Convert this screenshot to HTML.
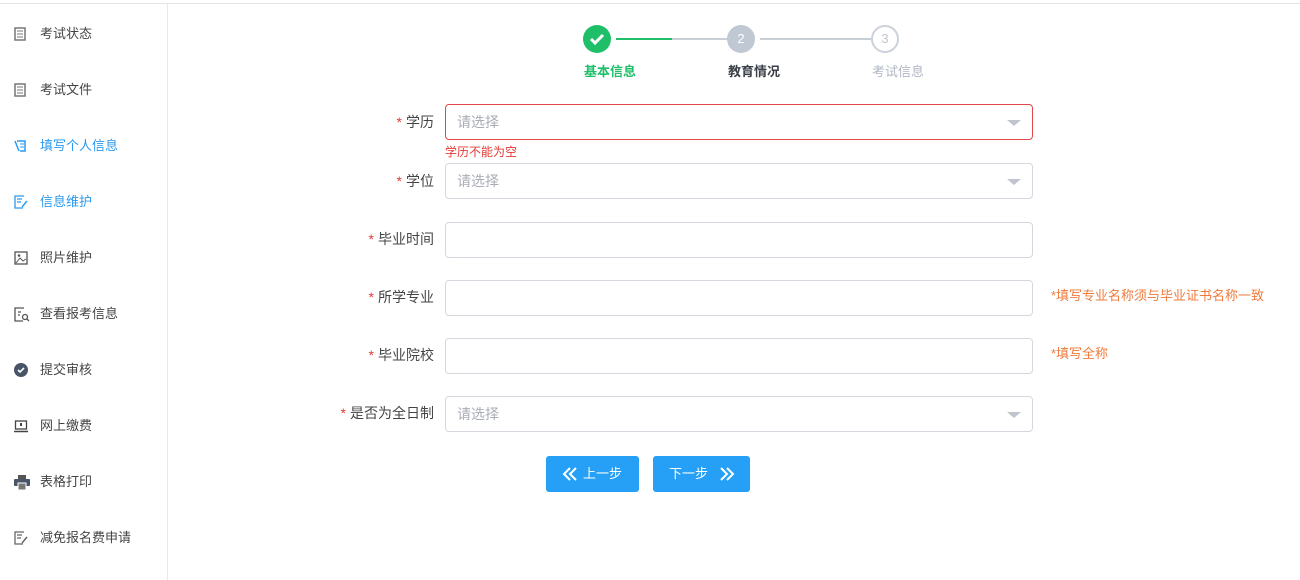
<!DOCTYPE html>
<html><head><meta charset="utf-8"><style>
*{margin:0;padding:0;box-sizing:border-box}
body{width:1300px;height:580px;background:#fff;font-family:"Liberation Sans","Noto Sans CJK SC",sans-serif;position:relative;overflow:hidden;color:#333}
.top{position:absolute;left:0;top:3px;width:1300px;height:1px;background:#e4e4e4}
.side{position:absolute;left:0;top:4px;width:168px;height:576px;border-right:1px solid #e8e8e8}
.mi{position:absolute;left:14px;font-size:13px;color:#444;height:20px;line-height:20px}
.mi svg{position:absolute;left:0;top:3px}
.mi span{position:absolute;left:26px;white-space:nowrap}
.blue{color:#2a9af0}
.abs{position:absolute}
.circ{position:absolute;width:28px;height:28px;border-radius:50%;text-align:center;line-height:28px;font-size:13px}
.lbl{position:absolute;right:866px;font-size:14px;color:#444;height:35px;line-height:35px;white-space:nowrap}
.lbl b{color:#e53935;font-weight:normal;margin-right:4px}
.inp{position:absolute;left:445px;width:588px;height:36px;border:1px solid #d4d8de;border-radius:4px;font-size:14px;color:#a8adb5;line-height:34px;padding-left:11px}
.inp .ar{position:absolute;right:11px;top:15px;width:0;height:0;border-left:7px solid transparent;border-right:7px solid transparent;border-top:6px solid #c0c4cc}
.hint{position:absolute;left:1051px;font-size:13px;color:#f07a3c}
.btn{position:absolute;top:456px;height:36px;background:#26a0f6;border-radius:3px;color:#fff;font-size:13px;line-height:36px}
.btn svg{position:absolute;top:10px}
</style></head><body>
<div class="top"></div>
<div class="side">
<div class="mi" style="top:20px"><svg width="12" height="14"><rect x="1" y="1" width="10" height="12" fill="none" stroke="#777" stroke-width="1.5"/><path d="M3 4h6M3 7h6M3 10h6" stroke="#777"/></svg><span>考试状态</span></div>
<div class="mi" style="top:76px"><svg width="12" height="14"><rect x="1" y="1" width="10" height="12" fill="none" stroke="#777" stroke-width="1.5"/><path d="M3 4h6M3 7h6M3 10h6" stroke="#777"/></svg><span>考试文件</span></div>
<div class="mi blue" style="top:132px"><svg width="12" height="14"><path d="M1 2l4 10M3 2h8v10H6" fill="none" stroke="#2a9af0" stroke-width="1.5"/><path d="M6 5h4M6 8h4" stroke="#2a9af0"/></svg><span>填写个人信息</span></div>
<div class="mi blue" style="top:188px"><svg width="14" height="14"><path d="M10 1H1v12h8M3 4h5M3 7h4" fill="none" stroke="#2a9af0" stroke-width="1.3"/><path d="M8 12l5-6" stroke="#2a9af0" stroke-width="1.5"/></svg><span>信息维护</span></div>
<div class="mi" style="top:244px"><svg width="14" height="14"><rect x="1" y="1" width="12" height="12" fill="none" stroke="#555" stroke-width="1.3"/><path d="M2 12l4-5 3 3 3-2" fill="none" stroke="#555"/><circle cx="5" cy="4.5" r="1.3" fill="#555"/></svg><span>照片维护</span></div>
<div class="mi" style="top:300px"><svg width="16" height="15"><path d="M10 1H1v13h8" fill="none" stroke="#555" stroke-width="1.3"/><circle cx="11" cy="10" r="2.5" fill="none" stroke="#555" stroke-width="1.3"/><path d="M13 12l2 2M4 5h3M4 8h2" stroke="#555" stroke-width="1.3"/></svg><span>查看报考信息</span></div>
<div class="mi" style="top:356px"><svg width="14" height="14"><circle cx="7" cy="7" r="7" fill="#485468"/><path d="M4 7l2 2 4-4" fill="none" stroke="#fff" stroke-width="1.6"/></svg><span>提交审核</span></div>
<div class="mi" style="top:412px"><svg width="14" height="14"><rect x="1.5" y="2" width="11" height="8" fill="none" stroke="#444" stroke-width="1.3"/><rect x="6" y="4" width="2" height="3" fill="#444"/><path d="M0 12.5h14" stroke="#444" stroke-width="1.5"/></svg><span>网上缴费</span></div>
<div class="mi" style="top:468px"><svg width="16" height="15"><rect x="4" y="0" width="8" height="4" fill="#555"/><rect x="0" y="4" width="16" height="7" rx="1" fill="#485468"/><rect x="4" y="8" width="8" height="7" fill="#777" stroke="#fff"/></svg><span>表格打印</span></div>
<div class="mi" style="top:524px"><svg width="14" height="14"><path d="M10 1H1v12h8M3 4h5M3 7h4" fill="none" stroke="#666" stroke-width="1.3"/><path d="M8 12l5-6" stroke="#666" stroke-width="1.5"/></svg><span>减免报名费申请</span></div>
</div>

<div class="circ" style="left:583px;top:25px;background:#1fbf6a"><svg width="28" height="28" style="position:absolute;left:0;top:0"><path d="M8 14l4 4 8-8" fill="none" stroke="#fff" stroke-width="3"/></svg></div>
<div class="abs" style="left:616px;top:38px;width:56px;height:2px;background:#1fbf6a"></div>
<div class="abs" style="left:672px;top:38px;width:56px;height:2px;background:#c8ced6"></div>
<div class="circ" style="left:727px;top:25px;background:#c0c8d4;color:#fff">2</div>
<div class="abs" style="left:760px;top:38px;width:112px;height:2px;background:#c8ced6"></div>
<div class="circ" style="left:871px;top:25px;border:2px solid #ccd2da;color:#c0c6ce;line-height:24px">3</div>
<div class="abs" style="left:584px;top:61px;font-size:13px;font-weight:bold;color:#1fbf6a">基本信息</div>
<div class="abs" style="left:728px;top:61px;font-size:13px;font-weight:bold;color:#3a3f48">教育情况</div>
<div class="abs" style="left:872px;top:61px;font-size:13px;color:#b0b8c4">考试信息</div>

<div class="lbl" style="top:105px"><b>*</b>学历</div>
<div class="inp" style="top:104px;border-color:#e0474c">请选择<div class="ar"></div></div>
<div class="abs" style="left:445px;top:143px;font-size:12px;color:#e53935">学历不能为空</div>
<div class="lbl" style="top:164px"><b>*</b>学位</div>
<div class="inp" style="top:163px">请选择<div class="ar"></div></div>
<div class="lbl" style="top:222px"><b>*</b>毕业时间</div>
<div class="inp" style="top:222px"></div>
<div class="lbl" style="top:280px"><b>*</b>所学专业</div>
<div class="inp" style="top:280px"></div>
<div class="hint" style="top:285px">*填写专业名称须与毕业证书名称一致</div>
<div class="lbl" style="top:338px"><b>*</b>毕业院校</div>
<div class="inp" style="top:338px"></div>
<div class="hint" style="top:343px">*填写全称</div>
<div class="lbl" style="top:396px"><b>*</b>是否为全日制</div>
<div class="inp" style="top:396px">请选择<div class="ar"></div></div>

<div class="btn" style="left:546px;width:93px"><svg width="16" height="16" style="left:16px"><path d="M8 2L2 8l6 6M14 2L8 8l6 6" fill="none" stroke="#fff" stroke-width="2"/></svg><span style="position:absolute;left:37px">上一步</span></div>
<div class="btn" style="left:653px;width:97px"><span style="position:absolute;left:16px">下一步</span><svg width="16" height="16" style="left:66px"><path d="M2 2l6 6-6 6M8 2l6 6-6 6" fill="none" stroke="#fff" stroke-width="2"/></svg></div>
</body></html>
